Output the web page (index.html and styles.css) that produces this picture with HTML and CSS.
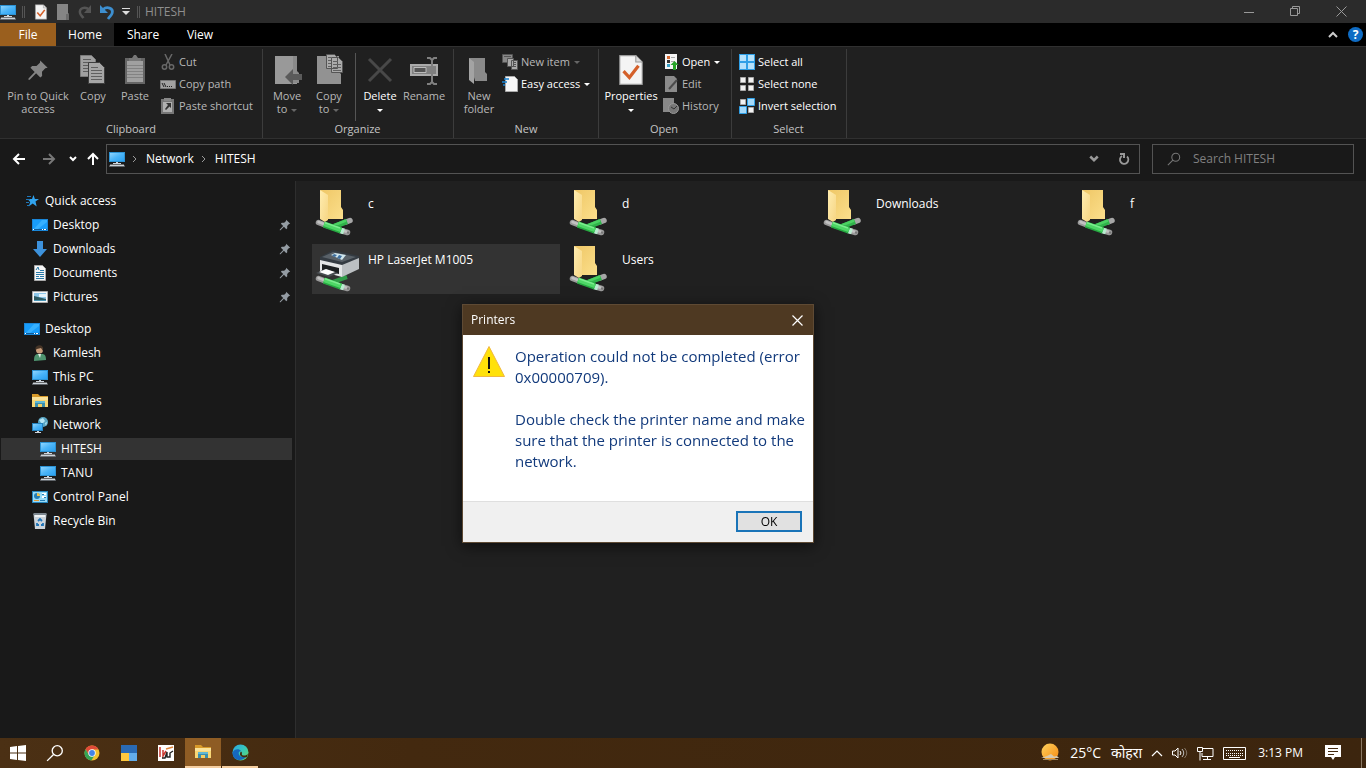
FILE: index.html
```html
<!DOCTYPE html>
<html lang="en">
<head>
<meta charset="utf-8">
<meta name="viewport" content="width=device-width, initial-scale=1">
<title>HITESH</title>
<link rel="stylesheet" href="styles.css">
</head>
<body>
<svg class="defs" aria-hidden="true">
  <defs>
    <linearGradient id="screen" x1="0" y1="0" x2="1" y2="1"><stop offset="0" stop-color="#8fd4fd"/><stop offset=".5" stop-color="#4bb5f8"/><stop offset="1" stop-color="#2ba0f0"/></linearGradient>
    <linearGradient id="fold" x1="0" y1="0" x2="1" y2="1"><stop offset="0" stop-color="#efc766"/><stop offset="1" stop-color="#fbdf8c"/></linearGradient>
    <linearGradient id="flap" x1="0" y1="0" x2="1" y2="1"><stop offset="0" stop-color="#ffedb0"/><stop offset="1" stop-color="#f6d583"/></linearGradient>
    <linearGradient id="edge" x1="0" y1="0" x2="1" y2="1"><stop offset="0" stop-color="#2aa5e8"/><stop offset=".5" stop-color="#38c8b8"/><stop offset="1" stop-color="#6bdc5c"/></linearGradient>
    <linearGradient id="sun" x1="0" y1="0" x2="1" y2="1"><stop offset="0" stop-color="#ffd25e"/><stop offset="1" stop-color="#f58a12"/></linearGradient>
    <symbol id="pc" viewBox="0 0 16 16"><path fill="#2d93d4" d="M0 1h16v10H0z"/><path fill="url(#screen)" d="M1 2h14v8H1z"/><path fill="#cfd6dc" d="M7 11h2v1h3v1H4v-1h3z"/><path fill="#a7b2bb" d="M1 14h14l1 1.500H0z"/><path fill="#e4e9ed" d="M1 13.600h14v1H1z"/></symbol>
    <symbol id="desk" viewBox="0 0 16 16"><path fill="#1a86d8" d="M0 2h16v12H0z"/><path fill="#189dfb" d="M1 3h14v9H1z"/><path fill="#36b0ff" d="M10 3h5v2L6 12H2z"/><path fill="#0c5c9c" d="M1 12h14v1H1z"/><path fill="#fff" d="M1 12h1v1H1zM10 12h1v1h-1zM12 12h2v1h-2z"/></symbol>
    <symbol id="pin" viewBox="0 0 16 16"><path fill="currentColor" d="M9.600 1 15 6.400l-1.700.3-2.400 2.500.1 3.100-1.300 1.200-3.100-3.100L2 15l-1 .1.100-1L5.600 9.400 2.500 6.300 3.700 5l3.200.1 2.500-2.400z"/></symbol>
    <symbol id="prop" viewBox="0 0 24 30"><path fill="#f4f4f4" stroke="#9a9a9a" d="M1.500 1.500h15l6 6v21h-21z"/><path fill="#ddd" stroke="#9a9a9a" d="M16.500 1.500v6h6"/><path fill="none" stroke="#d4602a" stroke-width="3" d="m5 16 5.500 6 8.500-11"/></symbol>
    <symbol id="cable" viewBox="0 0 48 48">
      <path stroke="#9a9a9a" stroke-width="5.500" stroke-linecap="round" d="m5.500 34.500 8 3m16 5.500 5 1.500"/>
      <path stroke="#c2c2c2" stroke-width="2.500" stroke-linecap="round" d="m5.500 34 8 3m16 5.500 5 1.500"/>
      <path stroke="#b9ecd0" stroke-width="6" d="m26 42 5 1.500"/>
      <path stroke="#27a942" stroke-width="6.500" d="m11 36.500 17 6"/>
      <path stroke="#4ed766" stroke-width="4.500" d="m11 36 17 6"/>
      <path stroke="#7cec8e" stroke-width="1.500" d="m12 34.800 15 5.200"/>
      <circle cx="35" cy="44.500" r="1.200" fill="#777"/>
    </symbol>
    <symbol id="branch" viewBox="0 0 48 48"><path stroke="#a6a6a6" stroke-width="5.500" stroke-linecap="round" d="m33 34 4-1.500"/><path stroke="#2fb34a" stroke-width="5.500" d="m20 39 14-5.500"/><path stroke="#4bd162" stroke-width="2.500" d="m19 38 14-5.500"/></symbol>
    <symbol id="folder" viewBox="0 0 48 48"><path fill="url(#fold)" d="M7 2h21v17l2 3v9H14z"/><path fill="url(#flap)" d="m7 2 8 5v25l-3 2-5-3z"/><use href="#branch"/><use href="#cable"/></symbol>
    <symbol id="printer" viewBox="0 0 48 48"><path stroke="#2f9c47" stroke-width="4" d="m20 38 14-5"/><path fill="#e4e6e7" d="m7 15 22 4v14L7 27z"/><path fill="#bcc0c3" d="m29 19 17-7v13l-17 8z"/><path fill="#343b42" d="M7 13 20 6l26 6v2l-17 7-22-5z"/><path fill="#596168" d="m9 13 11-5 23 5-14 5z"/><path fill="#cfe6ee" d="m18 11 4-2 11 2-4 5z"/><path fill="#3f6f9f" d="m21 10 3 1-2 2-3-1zm5 1 3 1-2 3-3-1z"/><path fill="#1d2022" d="m9 20 17 4v6L9 26z"/><path fill="#484d51" d="m3 29 9-4 13 4-9 4z"/><path fill="#fff" d="m6 28 7-3 9 3-7 3z"/><use href="#cable"/></symbol>
    <symbol id="lib" viewBox="0 0 16 16"><path fill="#d89a2a" d="M0 1h6l2 2h8v4H0z"/><path fill="#f8d775" d="M0 4h16v10H0z"/><path fill="#fae29a" d="M0 4h16v3H0z"/><path fill="#3b8fae" d="M3 8h10v6H3z"/><path fill="#61b8d4" d="M3 8h10v2H3z"/><path fill="#f4cf66" d="M6 11h4v3H6z"/></symbol>
    <symbol id="mag" viewBox="0 0 16 16"><circle cx="10" cy="6" r="4.500" fill="none" stroke="currentColor" stroke-width="1.200"/><path stroke="currentColor" stroke-width="1.200" d="m6.700 9.300-5.700 5.700"/></symbol>
    <symbol id="sheets" viewBox="0 0 28 32"><path fill="#a0a0a0" stroke="#7b7b7b" d="M1.500 1.500h11l4 4v17h-15z"/><path stroke="#5d5d5d" d="M4 5.500h8m-8 3h10m-10 3h10m-10 3h10m-10 3h10"/><path fill="#a6a6a6" stroke="#3e3e3e" d="M9.500 8.500h11l5 5v16h-16z"/><path stroke="#606060" d="M12 13.500h7m-7 3h11m-11 3h11m-11 3h11m-11 3h11"/></symbol>
    <symbol id="chev" viewBox="0 0 8 8"><path fill="none" stroke="currentColor" stroke-width="2" d="m1 2 3 3 3-3"/></symbol>
  </defs>
</svg>

<header class="titlebar">
  <svg class="i16"><use href="#pc"/></svg><i class="grip"></i>
  <button class="qat" aria-label="Properties"><svg class="i16"><use href="#prop"/></svg></button>
  <button class="qat" aria-label="New folder"><svg class="i16" viewBox="0 0 16 16"><path fill="#858585" d="M2 0h11v9l1 1v6H2z"/><path fill="#6b6b6b" d="M11 10h3v6h-3z"/></svg></button>
  <button class="qat" aria-label="Redo"><svg class="i16" viewBox="0 0 16 16"><path fill="none" stroke="#555" stroke-width="2.500" d="M12 5.500C8 2 2 4 3 9c.4 2 2 3 3.500 5"/><path fill="#555" d="M14 1v8H7z"/></svg></button>
  <button class="qat" aria-label="Undo"><svg class="i16" viewBox="0 0 16 16"><path fill="none" stroke="#3d8fd0" stroke-width="2.800" d="M4 5.500C8 2 14.500 4 13.200 9c-.4 2-2 3-4.200 6"/><path fill="#3d8fd0" d="M1 1v8h8z"/></svg></button>
  <button class="more" aria-label="Customize toolbar"><svg width="8" height="8" viewBox="0 0 8 8"><path fill="#ddd" d="M0 0h8v1H0zM0 3h8L4 7z"/></svg></button>
  <i class="grip"></i>
  <span class="wintitle">HITESH</span>
  <div class="winbtns">
    <button aria-label="Minimize"><svg width="10" height="10"><path stroke="#999" d="M0 5.500h10"/></svg></button>
    <button aria-label="Restore"><svg width="11" height="11"><path fill="none" stroke="#999" d="M.5 2.500h7v7h-7zM2.500 2V.5h7v7H8"/></svg></button>
    <button aria-label="Close"><svg width="11" height="11"><path stroke="#999" d="m.5.5 10 10m0-10-10 10"/></svg></button>
  </div>
</header>

<nav class="tabs">
  <button class="tab file">File</button><button class="tab home">Home</button><button class="tab">Share</button><button class="tab">View</button>
  <div class="tabs-right">
    <button aria-label="Collapse ribbon"><svg width="10" height="7"><path fill="none" stroke="#ccc" stroke-width="2" d="m1 6 4-4 4 4"/></svg></button>
    <button class="help" aria-label="Help">?</button>
  </div>
</nav>

<section class="ribbon">
  <div class="group clip">
    <div class="tools">
      <button class="big wide"><svg class="i32" viewBox="0 0 32 32"><g color="#858585"><use href="#pin" x="5" y="5" width="22" height="22"/></g></svg><span>Pin to Quick<br>access</span></button>
      <button class="big"><svg class="i32"><use href="#sheets"/></svg><span>Copy</span></button>
      <button class="big"><svg class="i32" viewBox="0 0 32 32"><path fill="#656565" d="M6 4h20v26H6z"/><path fill="#a0a0a0" d="M8 7h16v21H8z"/><path stroke="#828282" d="M8 11.500h16m-16 3h16m-16 3h16m-16 3h16m-16 3h16"/><path fill="#777" d="M10 7V4h3l2-3h2l2 3h3v3z"/></svg><span>Paste</span></button>
      <div class="stack">
        <button class="small"><svg class="i16" viewBox="0 0 16 16"><g fill="none" stroke="#686868" stroke-width="1.500"><path d="m5 0 5 11M12 0 6 11"/><circle cx="4.500" cy="13" r="2.200"/><circle cx="11.500" cy="13" r="2.200"/></g></svg>Cut</button>
        <button class="small"><svg class="i16" viewBox="0 0 16 16"><path fill="#a2a2a2" stroke="#777" d="M.5 4.500h15v8H.5z"/><path stroke="#222" d="m2 7 2 4m0-4 2 4"/><path fill="#222" d="M7 10h1v1H7zm2 0h1v1H9zm2 0h1v1h-1z"/></svg>Copy path</button>
        <button class="small"><svg class="i16" viewBox="0 0 16 16"><path fill="#777" d="M1 1h13v15H1z"/><path fill="#b0b0b0" d="M3 4h9v10H3z"/><path fill="#888" d="M4 0h7v3H4z"/><path fill="#333" d="M6 5h5v5L9.500 8.500 6 12 5 11l3-4z"/></svg>Paste shortcut</button>
      </div>
    </div><div class="caption">Clipboard</div>
  </div>
  <div class="group org">
    <div class="tools">
      <button class="big"><svg class="i32" viewBox="0 0 32 32"><path fill="#999" d="M4 2h22v28H4z"/><path fill="#8a8a8a" d="M22 2h4v15l2 2v10h-6z"/><path fill="#5a5a5a" d="m14 23 8-8v5h9v6h-9v5z"/></svg><span>Move<br>to<i class="dd"></i></span></button>
      <button class="big"><svg class="i32" viewBox="0 0 32 32"><path fill="#929292" d="M4 2h22v16l2 2v10H4z"/><path fill="#aaa" stroke="#555" d="M13.500.500h8l3 3v11h-11zM18.500 3.500h7l4 4v11h-11z"/><path stroke="#606060" d="M15 3.500h3m-3 3h3m-3 3h3m-3 3h3m2-5h5m-5 3h8m-8 3h8m-8 3h8"/></svg><span>Copy<br>to<i class="dd"></i></span></button>
      <i class="divider"></i>
      <button class="big on"><svg class="i32" viewBox="0 0 32 32"><path stroke="#484848" stroke-width="3" d="m5 5 22 22m0-22L5 27"/></svg><span>Delete<br><i class="dd"></i></span></button>
      <button class="big"><svg class="i32" viewBox="0 0 32 32"><path fill="#808080" stroke="#aaa" stroke-width="2" d="M3 11h26v10H3z"/><path fill="#555" stroke="#bbb" stroke-width="1" d="M6 13.500h12v5H6z"/><path fill="none" stroke="#808080" stroke-width="2" d="M19 4h3l2 2 2-2h3m-5 2v22m-5 2h3l2-2 2 2h3"/></svg><span>Rename</span></button>
    </div><div class="caption">Organize</div>
  </div>
  <div class="group new">
    <div class="tools">
      <button class="big"><svg class="i32" viewBox="0 0 32 32"><path fill="#8a8a8a" d="M6 4h16v14l2 2v7H12z"/><path fill="#a3a3a3" d="m6 4 5 4v22l-5-4z"/></svg><span>New<br>folder</span></button>
      <div class="stack">
        <button class="small"><svg class="i16" viewBox="0 0 16 16"><path fill="#888" stroke="#555" d="M.5.500h10v8H.5z"/><path fill="#aaa" stroke="#555" d="M5.500 4.500h6v8h-6zM9.500 6.500h6v9h-6z"/><path stroke="#555" d="M2 2.500h7m2 6h3m-3 2h3m-3 2h3"/></svg>New item<i class="dd"></i></button>
        <button class="small on"><svg class="i16" viewBox="0 0 16 16"><path fill="#f6f6f6" stroke="#aaa" d="M3.500.500h9l3 3v12h-12z"/><path stroke="#1782d2" stroke-width="1.500" d="M2 3h5M0 6h5m-4 3h2"/></svg>Easy access<i class="dd"></i></button>
      </div>
    </div><div class="caption">New</div>
  </div>
  <div class="group open">
    <div class="tools">
      <button class="big on wide"><svg class="i32"><use href="#prop"/></svg><span>Properties<br><i class="dd"></i></span></button>
      <div class="stack">
        <button class="small on"><svg class="i16" viewBox="0 0 16 16"><path fill="#f5f5f5" d="M2 0h12v15H2z"/><path fill="#d66a33" d="M4 2h3v3H4z"/><path fill="#333" d="M4 6h3v3H4z"/><path fill="#36a0c8" d="M4 10h3v3H4z"/><path stroke="#aaa" d="M8 3.500h4m-4 4h4"/><path fill="#28a428" d="m11.500 7 4 4H13v5h-3v-5H7.500z"/></svg>Open<i class="dd"></i></button>
        <button class="small"><svg class="i16" viewBox="0 0 16 16"><path fill="#8b8b8b" d="M2 0h9l3 3v13H2z"/><path stroke="#4b4b4b" stroke-width="2" d="m6 13 8-9"/></svg>Edit</button>
        <button class="small"><svg class="i16" viewBox="0 0 16 16"><path fill="#888" d="M0 0h11v14H0z"/><circle cx="10.500" cy="10.500" r="5" fill="#777" stroke="#999"/><path fill="none" stroke="#333" d="m8 9 3 2 3-3"/></svg>History</button>
      </div>
    </div><div class="caption">Open</div>
  </div>
  <div class="group sel">
    <div class="tools">
      <div class="stack">
        <button class="small on"><svg class="i16" viewBox="0 0 16 16"><path fill="#2f9fe6" d="M0 0h16v16H0z"/><path fill="#b5e1fb" d="M1 1h6v6H1zm8 0h6v6H9zM1 9h6v6H1zm8 0h6v6H9z"/></svg>Select all</button>
        <button class="small on"><svg class="i16" viewBox="0 0 16 16"><path fill="#f2f2f2" stroke="#aaa" d="M1.500 1.500h5v5h-5zm8 0h5v5h-5zm-8 8h5v5h-5zm8 0h5v5h-5z"/></svg>Select none</button>
        <button class="small on"><svg class="i16" viewBox="0 0 16 16"><path fill="#f2f2f2" stroke="#aaa" d="M1.500 1.500h5v5h-5zm8 8h5v5h-5z"/><path fill="#a6dafa" stroke="#2f9fe6" d="M8.500.500h7v7h-7zm-8 8h7v7h-7z"/></svg>Invert selection</button>
      </div>
    </div><div class="caption">Select</div>
  </div>
</section>

<section class="locbar">
  <div class="history">
    <button aria-label="Back"><svg width="14" height="12"><path fill="none" stroke="#fff" stroke-width="2" d="M13 6H2m5-5L2 6l5 5"/></svg></button>
    <button aria-label="Forward"><svg width="14" height="12"><path fill="none" stroke="#777" stroke-width="2" d="M1 6h11M7 1l5 5-5 5"/></svg></button>
    <button class="recent" aria-label="Recent locations"><svg width="8" height="8"><use href="#chev"/></svg></button>
    <button class="up" aria-label="Up"><svg width="12" height="14"><path fill="none" stroke="#fff" stroke-width="2" d="M6 13V2M1 7l5-5 5 5"/></svg></button>
  </div>
  <div class="address">
    <svg class="i16"><use href="#pc"/></svg>
    <svg class="sep" width="5" height="8"><path fill="none" stroke="#999" d="m1 1 3 3-3 3"/></svg>
    <a href="#network">Network</a>
    <svg class="sep" width="5" height="8"><path fill="none" stroke="#999" d="m1 1 3 3-3 3"/></svg>
    <a href="#hitesh">HITESH</a>
    <button class="drop" aria-label="Previous locations"><svg width="10" height="10"><use href="#chev"/></svg></button>
    <button class="drop" aria-label="Refresh"><svg width="12" height="12"><path fill="none" stroke="#999" stroke-width="1.800" d="M4 3a4.200 4.200 0 1 0 5 .5"/><path fill="#999" d="M2 0h5v5H5V2H2z"/></svg></button>
  </div>
  <label class="search"><svg width="14" height="14"><use href="#mag"/></svg><input type="text" aria-label="Search HITESH" placeholder="Search HITESH"></label>
</section>

<main class="panes">
  <aside class="tree">
    <a class="node root" href="#q"><svg class="i16" viewBox="0 0 16 16"><path fill="#31a4ef" d="m9.500 2 1.400 4H15l-3.500 2.500 1.200 5-4-3-4 3 1.500-4.500L3.500 6H8z"/><path stroke="#1f77b8" d="M3 3.500h4m-5 3h4m-4 3h3m-2 3h3"/></svg>Quick access</a>
    <a class="node" href="#d"><svg class="i16"><use href="#desk"/></svg>Desktop<svg class="pin"><use href="#pin"/></svg></a>
    <a class="node" href="#dl"><svg class="i16" viewBox="0 0 16 16"><path fill="#3d92dc" d="M5 0h6v8h4l-7 8-7-8h4z"/></svg>Downloads<svg class="pin"><use href="#pin"/></svg></a>
    <a class="node" href="#doc"><svg class="i16" viewBox="0 0 16 16"><path fill="#f6f6f6" stroke="#aaa" d="M2.500.500h8l3 3v12h-11z"/><path fill="none" stroke="#2a7aa8" d="M8 5.500h4m-8 2h8m-8 2h8m-8 2h3m1 0h4m-8 2h8M4 5l2-3 1 3"/></svg>Documents<svg class="pin"><use href="#pin"/></svg></a>
    <a class="node" href="#p"><svg class="i16" viewBox="0 0 16 16"><path fill="#f6f6f6" stroke="#aaa" d="M.5 2.500h15v11H.5z"/><path fill="#8dc6e8" d="M2 4h12v8H2z"/><path fill="#e3f2fa" d="M7 5h7v3H7z"/><path fill="#2d5960" d="m2 7 4 1 8 2v1H2z"/><path fill="#4794b4" d="M2 11h12v1H2z"/></svg>Pictures<svg class="pin"><use href="#pin"/></svg></a>
    <a class="node root second" href="#desktop"><svg class="i16"><use href="#desk"/></svg>Desktop</a>
    <a class="node" href="#k"><svg class="i16" viewBox="0 0 16 16"><path fill="#4f9470" d="M2 16c0-5 1-7 4-7h4c3 0 4 2 4 6z"/><path fill="#dff0e6" d="m6 9 2 4 1-4z"/><circle cx="7.500" cy="5" r="3.500" fill="#c99d7b"/><path fill="#453426" d="M3.500 5C2 0 11-2 11 4v2L9 3 5 4z"/></svg>Kamlesh</a>
    <a class="node" href="#pc2"><svg class="i16"><use href="#pc"/></svg>This PC</a>
    <a class="node" href="#lib2"><svg class="i16"><use href="#lib"/></svg>Libraries</a>
    <a class="node" href="#network"><svg class="i16" viewBox="0 0 16 16"><circle cx="11" cy="5" r="5" fill="#5aa6c4"/><path fill="#b5e4f4" d="m7 3 4-2 2 3-3 3zM13 6l2-1-1 4z"/><path fill="#2582bd" d="M0 6h11v8H0z"/><path fill="url(#screen)" d="M1 7h9v6H1z"/><path fill="#cfd6dc" d="M5 14h2v1h2v1H3v-1h2z"/></svg>Network</a>
    <a class="node leaf active" href="#hitesh"><svg class="i16"><use href="#pc"/></svg>HITESH</a>
    <a class="node leaf" href="#tanu"><svg class="i16"><use href="#pc"/></svg>TANU</a>
    <a class="node" href="#cp"><svg class="i16" viewBox="0 0 16 16"><path fill="#2686bf" d="M0 2h16v12H0z"/><path fill="#98dbf8" d="M1 3h14v10H1z"/><circle cx="5" cy="7" r="3" fill="#257db4"/><path fill="#f2c34e" d="M5 7V4a3 3 0 0 1 3 3z"/><path stroke="#fff" stroke-width="2" d="M10 5h4m-4 3h4"/><path stroke="#257db4" d="M10 5.500h2m0 3h2M8 11.500h5"/><path fill="#e09a38" d="M2 11h5v1H2z"/></svg>Control Panel</a>
    <a class="node" href="#bin"><svg class="i16" viewBox="0 0 16 16"><path fill="#cbd3da" d="M1.500 1h13L13 16H3z"/><path fill="#7d878f" d="M1.500 0h13v2h-13z"/><path fill="#eff3f5" d="M3 2h10v2H3z"/><path fill="none" stroke="#1f75b8" stroke-width="1.800" d="m6 8 2-2 2 2m1 2v2H9m-2 0H5v-2"/></svg>Recycle Bin</a>
  </aside>
  <section class="files">
    <a class="tile" href="#c"><svg><use href="#folder"/></svg><span>c</span></a>
    <a class="tile" href="#d"><svg><use href="#folder"/></svg><span>d</span></a>
    <a class="tile" href="#dl"><svg><use href="#folder"/></svg><span>Downloads</span></a>
    <a class="tile" href="#f"><svg><use href="#folder"/></svg><span>f</span></a>
    <a class="tile active" href="#hp"><svg><use href="#printer"/></svg><span>HP LaserJet M1005</span></a>
    <a class="tile" href="#users"><svg><use href="#folder"/></svg><span>Users</span></a>
  </section>
</main>

<section class="dialog" role="alertdialog" aria-label="Printers">
  <header><span>Printers</span><button aria-label="Close"><svg width="11" height="11"><path stroke="#fff" stroke-width="1.200" d="m.5.5 10 10m0-10-10 10"/></svg></button></header>
  <div class="message">
    <svg width="34" height="34" viewBox="0 0 34 34"><path fill="#ffe10a" stroke="#f0b840" stroke-linejoin="round" d="m17 .500 15.500 30h-31z"/><path fill="#111" d="M16 11h2v12h-2zm0 14h2v2h-2z"/></svg>
    <div><p>Operation could not be completed (error 0x00000709).</p><p>Double check the printer name and make sure that the printer is connected to the network.</p></div>
  </div>
  <footer><button>OK</button></footer>
</section>

<footer class="taskbar">
  <button aria-label="Start"><svg width="16" height="16"><path fill="#fff" d="m0 2 7-1v6.500H0zM8 .900 16 0v7.500H8zM0 8.500h7V15l-7-1zM8 8.500h8V16l-8-.9z"/></svg></button>
  <button aria-label="Search"><svg width="18" height="18"><use href="#mag"/></svg></button>
  <button aria-label="Chrome"><svg width="16" height="16" viewBox="0 0 16 16"><circle cx="8" cy="8" r="7.500" fill="#f2c230"/><path fill="#df4a38" d="M1.500 4.200A7.500 7.500 0 0 1 14.600 4.400H8L5 10z"/><path fill="#35a455" d="M1.500 4.200A7.500 7.500 0 0 0 7.300 15.500L11 9.800 5 10z"/><circle cx="8" cy="8" r="3.700" fill="#fff"/><circle cx="8" cy="8" r="2.900" fill="#4384e8"/></svg></button>
  <button aria-label="Blocks"><svg width="16" height="16"><path fill="#2a6ab4" d="M0 0h16v8H0z"/><path fill="#ffc83d" d="M0 8h8v8H0z"/><path fill="#63acea" d="M8 8h8v8H8z"/></svg></button>
  <button aria-label="Ledger"><svg width="16" height="16"><path fill="#fff" d="M0 0h16v16H0z"/><path fill="none" stroke="#c8362f" stroke-width="1.500" d="M2 2v10M5 5v6l3-5"/><path fill="none" stroke="#222" stroke-width="1.400" d="M4 13h3l2-6v5h3V8l3-2m-3 6V8"/><path stroke="#e0853a" stroke-width="1.500" d="m8 4 7-2"/></svg></button>
  <button class="running focus" aria-label="File Explorer"><svg width="16" height="16"><use href="#lib"/></svg></button>
  <button class="running" aria-label="Edge"><svg width="17" height="17" viewBox="0 0 17 17"><circle cx="8.500" cy="8.500" r="8" fill="url(#edge)"/><path fill="#1668bd" d="M.5 8.500C2 5 7 4 9 7c-4 0-3 7 5 6C10 18 .5 17 .5 8.500z"/><path fill="#43290f" d="M9 7.500c2 1 0 3 1.500 3.800 2 .8 4.500 0 5.500-1.500L15 13c-5 1.500-9-2-6-5.500z"/></svg></button>
  <div class="tray">
    <button class="weather"><svg width="20" height="20"><circle cx="10" cy="9" r="8.500" fill="url(#sun)"/><path fill="#d9c9ac" d="M1 15h18l-2-2-3 .5-3-2.500-4 2z"/><path fill="#a08862" d="M3 16h15v1H3z"/></svg><span>25°C</span><span class="hindi" lang="hi">कोहरा</span></button>
    <button aria-label="Show hidden icons"><svg width="12" height="8"><path fill="none" stroke="#fff" stroke-width="1.200" d="m1 7 5-5 5 5"/></svg></button>
    <button aria-label="Volume"><svg width="16" height="14"><path fill="none" stroke="#fff" d="M.5 5v4H3l3 3V2L3 5zM8 5q2 2 0 4"/><path fill="none" stroke="#bbb" d="M10 3q3.500 4 0 8"/><path fill="none" stroke="#857767" d="M12.500 2q4.500 5 0 10"/></svg></button>
    <button aria-label="Network"><svg width="17" height="15"><path fill="none" stroke="#fff" d="M6 2.500h10v8H5V7M.5 1.500h5v4h-5zM3 6v8.500M10.500 11v2.500M6 13.500h8"/></svg></button>
    <button aria-label="Touch keyboard"><svg width="23" height="13"><path fill="none" stroke="#fff" d="M.5.500h22v12H.5z"/><path stroke="#fff" stroke-dasharray="1 1" d="M3 3.500h17m-17 3h17M3 8.500h17"/><path stroke="#fff" d="M6 10.500h11"/></svg></button>
    <span class="clock">3:13 PM</span>
    <button aria-label="Notifications"><svg width="16" height="16"><path fill="#fff" d="M0 0h16v12h-6l-2 3-2-3H0z"/><path stroke="#43290f" d="M3 3.500h10m-10 3h10m-10 3h6"/></svg></button>
    <button class="peek" aria-label="Show desktop"></button>
  </div>
</footer>
</body>
</html>
```
FILE: styles.css
```css
* { box-sizing: border-box; }
body {
  margin: 0;
  height: 100vh;
  display: flex;
  flex-direction: column;
  overflow: hidden;
  background: #191919;
  color: #fff;
  font: 12px/16px "Segoe UI", "Open Sans", "Noto Sans", sans-serif;
}
button, input { font: inherit; color: inherit; background: none; border: 0; padding: 0; margin: 0; }
button { display: flex; align-items: center; justify-content: center; }
a { color: inherit; text-decoration: none; }
svg { flex: none; display: block; }
.defs { position: absolute; width: 0; height: 0; }
.i16 { width: 16px; height: 16px; }
.i32 { width: 32px; height: 32px; }

/* Title bar */
.titlebar { display: flex; align-items: center; height: 23px; background: #2b2b2b; flex: none; }
.grip { width: 3px; height: 12px; margin: 0 5px 0 6px; border: 1px solid #555; border-width: 0 1px; }
.more + .grip { margin-left: 3px; }
.qat { width: 22px; height: 22px; }
.more { width: 16px; height: 22px; }
.wintitle { color: #8f8f8f; }
.winbtns { margin-left: auto; display: flex; padding-right: 2px; }
.winbtns button { width: 46px; height: 22px; }

/* Tabs */
.tabs { display: flex; height: 23px; background: #000; flex: none; }
.tab { width: 56px; }
.home { width: 58px; background: #202020; }
.home + .tab { width: 58px; }
.file { background: #9a5f1e; }
.tabs-right { margin-left: auto; display: flex; align-items: center; gap: 10px; padding-right: 3px; }
.help { width: 15px; height: 15px; border-radius: 50%; background: #0f6cc4; font-weight: 700; }

/* Ribbon */
.ribbon { display: flex; height: 93px; background: #202020; border: 1px solid #303030; border-width: 1px 0; flex: none; font-size: 11px; }
.group { display: flex; flex-direction: column; justify-content: space-between; padding: 4px 4px 1px; border-right: 1px solid #3c3c3c; margin: 2px 0 0; }
.tools { display: flex; height: 68px; }
.caption { text-align: center; color: #c4c4c4; }
.clip { width: 263px; }
.org { width: 191px; padding-left: 3px; }
.new { width: 145px; }
.open { width: 133px; padding-left: 2px; }
.sel { width: 115px; padding-left: 3px; }
.big { width: 42px; flex-direction: column; justify-content: flex-start; line-height: 13px; color: #b8b8b8; white-space: nowrap; padding-top: 1px; gap: 3px; }
.big.wide { width: 68px; }
.open .big.wide { width: 60px; }
.org .divider ~ .big { width: 44px; }
.stack { display: flex; flex-direction: column; margin: -2px 0 0 4px; }
.new .stack, .open .stack { margin-left: 2px; }
.small { height: 22px; gap: 3px; justify-content: flex-start; color: #b8b8b8; white-space: nowrap; }
.on { color: #fff; }
.divider { width: 1px; margin: 0 2px 0 5px; background: #555; }
.dd { display: inline-block; border: 3px solid transparent; border-top-color: #666; border-bottom: 0; margin-left: 4px; vertical-align: middle; }
.on .dd { border-top-color: #fff; }
.small .dd { margin-left: 1px; }
.big.on .dd { margin-left: 0; }

/* Location bar */
.locbar { display: flex; align-items: flex-start; height: 42px; padding: 5px 12px 0 0; flex: none; }
.history { display: flex; width: 106px; height: 30px; padding-left: 4px; }
.history button { width: 30px; }
.history .recent { width: 18px; }
.history .up { width: 22px; }
.address { flex: 1; display: flex; align-items: center; height: 30px; padding-left: 2px; border: 1px solid #535353; }
.sep { margin: 0 9px 0 7px; }
.drop { width: 30px; height: 28px; color: #999; }
.address a + .drop { margin-left: auto; }
.search { display: flex; align-items: center; width: 202px; height: 30px; margin-left: 12px; padding-left: 14px; gap: 12px; border: 1px solid #535353; color: #777; }
.search input { width: 130px; outline: 0; }
.search input::placeholder { color: #808080; opacity: 1; }

/* Panes */
.panes { flex: 1; display: flex; min-height: 0; }
.tree { width: 296px; padding: 9px 3px 0 1px; border-right: 1px solid #2e2e2e; overflow: hidden; }
.node { display: flex; align-items: center; gap: 5px; height: 22px; margin-bottom: 2px; padding: 0 1px 0 31px; }
.node.root { padding-left: 23px; }
.node.leaf { padding-left: 39px; }
.node.second { margin-top: 10px; }
.node.active { background: #333; }
.node .pin { width: 12px; height: 12px; margin-left: auto; color: #949ca3; }
.files { flex: 1; display: grid; grid-template-columns: repeat(auto-fill, 248px); grid-auto-rows: 50px; align-content: start; gap: 6px; padding: 7px 16px; background: #202020; }
.tile { display: flex; padding: 0 0 0 1px; gap: 7px; }
.tile svg { width: 48px; height: 48px; }
.tile span { padding-top: 8px; }
.tile.active { background: #333; }

/* Message box */
.dialog { position: fixed; left: 50%; top: 304px; width: 352px; margin-left: -221px; border: 1px solid #5e4a34; background: #fff; color: #000; box-shadow: 0 3px 14px #0009; }
.dialog header { display: flex; align-items: center; justify-content: space-between; height: 30px; padding: 0 10px 0 8px; background: #4e3922; color: #fff; }
.message { display: flex; gap: 9px; min-height: 166px; padding: 11px 4px 0 9px; color: #123a7c; font-size: 15px; line-height: 21px; }
.message p { margin: 0 0 21px; }
.dialog footer { display: flex; justify-content: flex-end; padding: 9px 11px 10px; background: #f0f0f0; border-top: 1px solid #dfdfdf; }
.dialog footer button { width: 66px; height: 21px; border: 2px solid #1a74b8; background: #e1e1e1; }

/* Taskbar */
.taskbar { display: flex; height: 30px; gap: 1px; background: linear-gradient(90deg, #4b3014, #43290f 30%, #3c250e); flex: none; }
.taskbar > button { width: 36px; }
.running { border-bottom: 2px solid #f6cfa0; }
.focus { background: #8e5c24; }
.tray { display: flex; align-items: center; margin-left: auto; gap: 9px; }
.weather { gap: 10px; font-size: 14px; }
.hindi { font-family: "Noto Sans Devanagari", "Noto Sans", sans-serif; padding-top: 3px; }
.clock { margin: 0 13px 0 3px; }
.peek { width: 5px; height: 30px; margin-left: 11px; border-left: 1px solid #8a7863; }
```
